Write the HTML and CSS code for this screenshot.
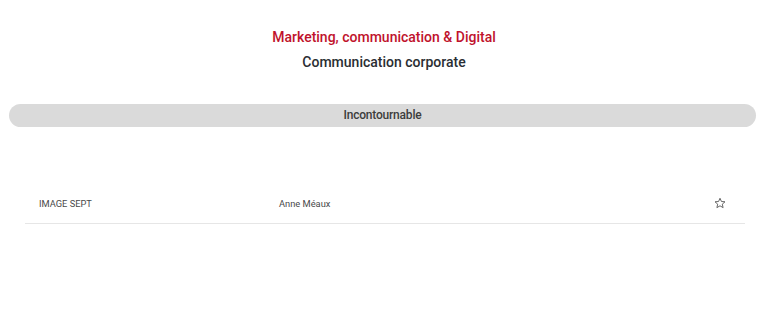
FILE: index.html
```html
<!DOCTYPE html>
<html lang="fr">
	<head>
		<meta charset="UTF-8" />
		<meta name="viewport" content="width=device-width, initial-scale=1.0" />
		<title>Communication corporate</title>
		<link rel="stylesheet" href="styles.css">
	</head>
	<body>
		<div class="header">
			<h1 class="category">Marketing, communication &amp; Digital</h1>
			<h2 class="subcategory">Communication corporate</h2>
		</div>
		<div class="section-bar">Incontournable</div>
		<div class="list">
			<div class="list-row">
				<span class="col-company">IMAGE SEPT</span>
				<span class="col-name">Anne Méaux</span>
				<span class="col-fav">
					<svg width="12" height="12" viewBox="0 0 24 24" fill="none" stroke="#666" stroke-width="2" stroke-linejoin="round">
						<polygon points="12,2.5 14.9,9 22,9.6 16.6,14.3 18.2,21.3 12,17.6 5.8,21.3 7.4,14.3 2,9.6 9.1,9" />
					</svg>
				</span>
			</div>
		</div>
	</body>
</html>
```

FILE: styles.css
```css
body {
	font-family: Roboto, 'Noto Sans', sans-serif;
	margin: 0;
	padding: 0;
	background-color: #ffffff;
	color: #333;
}
.header {
	padding-top: 27px;
	text-align: center;
}
.category {
	margin: 0;
	font-size: 14px;
	line-height: 20px;
	font-weight: 500;
	color: #c0122c;
}
.subcategory {
	margin: 5px 0 0;
	font-size: 14px;
	line-height: 20px;
	font-weight: 500;
	color: #2a2e33;
}
.section-bar {
	margin: 32px 12px 0 9px;
	height: 23px;
	line-height: 23px;
	border-radius: 12px;
	background: #dadada;
	text-align: center;
	font-size: 12px;
	letter-spacing: -0.2px;
	font-weight: 500;
	color: #3d3d3d;
}
.list {
	margin: 56px 23px 0 25px;
}
.list-row {
	display: grid;
	grid-template-columns: 240px 1fr auto;
	align-items: center;
	height: 40px;
	padding: 0 19px 0 14px;
	border-bottom: 1px solid #e6e6e6;
	font-size: 9.3px;
	color: #4a4a4a;
}
.col-fav {
	display: flex;
	align-items: center;
}
```
